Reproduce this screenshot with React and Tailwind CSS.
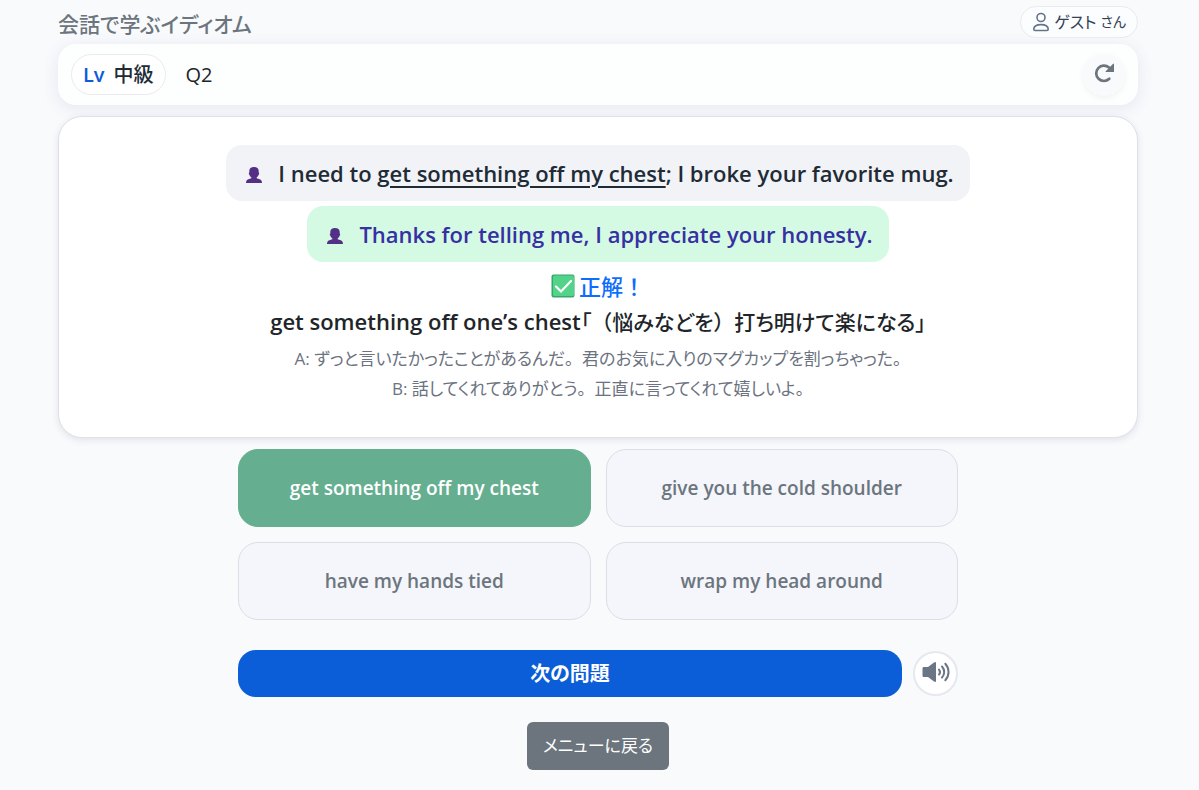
import { useState } from "react";

const choices = [
    "get something off my chest",
    "give you the cold shoulder",
    "have my hands tied",
    "wrap my head around",
];
const answer = choices[0];

// keeps full width punctuation inside proportional kana
function Wide({ children }) {
    return <span className="[font-feature-settings:normal]">{children}</span>
}

function Speaker() {
    return <svg viewBox="0 0 16 16" className="mt-1 w-4 h-4 shrink-0" aria-hidden="true">
        <path d="M3.300 4C3.300 1.300 5 0 8 0s4.700 1.300 4.700 4v1.600c.7.200.6 1.900-.1 2.100-.3 1.200-.9 2-1.900 2.600v1l3 1c1.500.6 2.200 1.500 2.300 3.700H0c.1-2.200.8-3.100 2.300-3.700l3-1v-1C4.300 9.700 3.700 8.900 3.400 7.700c-.7-.2-.8-1.900-.1-2.100z" fill="#533085" />
    </svg>
}

function CheckMark() {
    return <svg viewBox="0 0 24 24" className="w-6 h-6" aria-hidden="true">
        <rect x="0.500" y="0.500" width="23" height="23" rx="2" fill="#35a868" />
        <rect x="2" y="1.500" width="21" height="20.500" rx="1.500" fill="#53d28a" />
        <path d="M5 12.500l5 5L20 7" fill="none" stroke="#fff" strokeWidth="2.200" strokeLinecap="round" />
    </svg>
}

function PersonIcon() {
    return <svg viewBox="0 0 18 20" className="h-5 w-[18px]" fill="none" stroke="#64748b" strokeWidth="1.600" aria-hidden="true">
        <circle cx="9" cy="5.500" r="4" />
        <path d="M1.800 17.300C1.800 14.500 4.500 12.600 9 12.600s7.200 1.900 7.200 4.700c0 .8-.4 1.200-1.200 1.200H3c-.8 0-1.200-.4-1.200-1.200z" />
    </svg>
}

function RetryIcon() {
    return <svg viewBox="0 0 20 20" className="mb-[3px] w-5 h-5" aria-hidden="true">
        <path d="M15.300 15.800A7.700 7.700 0 1 1 15 4.500" fill="none" stroke="#6c757d" strokeWidth="2.700" strokeLinecap="round" />
        <path d="M20 1.300v7.200q0 .6-.6.600h-7.400q-1 0-.3-.8L18.900.9q1.100-.9 1.100.4z" fill="#6c757d" />
    </svg>
}

function SoundIcon() {
    return <svg viewBox="0 0 28 20" className="mb-[3px] w-7 h-5" aria-hidden="true">
        <path d="M.5 6.500C.5 5.500 1 5 2 5h4l6-4.500q2-1 2 .5v18q0 1.500-2 .5L6 15H2C1 15 .5 14.500.5 13.500z" fill="#6b7684" />
        <path d="M17 7.500a4 4 0 0 1 0 5M20 4.500a8 8 0 0 1 0 11M23.300 1.800a12 12 0 0 1 0 16.400" fill="none" stroke="#6b7684" strokeWidth="2" strokeLinecap="round" />
    </svg>
}

export default function App() {
    const [selected, setSelected] = useState(answer);

    return <div className="min-h-screen bg-[#f9fafc] pl-[58px] pr-[61px] pb-5 text-[#212529] font-['Open_Sans','Noto_Sans_CJK_JP',sans-serif] [font-feature-settings:'palt'] [text-spacing-trim:space-all]">
        <header className="flex h-11 items-center justify-between pb-px">
            <h1 className="pt-1 text-[21px] leading-7 font-medium text-[#6c757d]">会話で学ぶイディオム</h1>
            <button className="relative z-10 flex h-8 items-center gap-1 rounded-full border border-[#e9ebf0] bg-[#fcfdfe] px-[11px] text-base text-[#334155]">
                <PersonIcon />
                <span>ゲスト</span>
                <span className="text-sm">さん</span>
            </button>
        </header>

        <main>
            <section className="flex h-[61px] items-center justify-between rounded-[18px] bg-[#fdfefe] px-[13px] shadow-[0_3px_14px_3px_rgba(80,80,150,0.08)]">
                <div className="flex items-center gap-5 text-xl">
                    <span className="flex h-[41px] items-center gap-[9px] rounded-full border border-[#e9ebee] bg-white px-[11px] font-semibold">
                        <span className="text-[#0d5bdb]">Lv</span>
                        <span className="font-medium text-[#212b36]">中級</span>
                    </span>
                    <span>Q2</span>
                </div>
                <button aria-label="やり直す" className="flex size-[42px] items-center justify-center rounded-full bg-[#f9fafc] shadow-[0_2px_6px_rgba(0,0,0,0.05)]">
                    <RetryIcon />
                </button>
            </section>

            <section className="relative mt-[11px] flex flex-col items-center rounded-3xl border border-[#dfe1e9] bg-white px-6 pt-7 pb-[33px] text-center shadow-[0_2px_7px_rgba(60,60,110,0.12)]">
                <p className="flex min-h-14 items-center gap-4 rounded-2xl bg-[#f2f3f6] pl-5 pr-4 text-[22px] font-semibold text-[#212b36]">
                    <Speaker />
                    <span>I need to <u className="underline-offset-4 decoration-2">get something off my chest</u>; I broke your favorite mug.</span>
                </p>
                <p className="mt-[5px] flex min-h-14 items-center gap-4 rounded-2xl bg-[#d5fae4] pl-5 pr-4 text-[22px] font-semibold text-[#3730a3]">
                    <Speaker />
                    <span>Thanks for telling me, I appreciate your honesty.</span>
                </p>
                <p className="mt-2 flex h-8 items-center gap-1 text-[22px] font-medium text-[#0d6efd]">
                    <CheckMark />
                    <span>正解<Wide>！</Wide></span>
                </p>
                <p className="mt-px text-[22px] leading-9 font-semibold">
                    get something off one’s chest
                    <span className="text-[21px] font-medium">「<Wide>（</Wide>悩みなどを<Wide>）</Wide>打ち明けて楽になる」</span>
                </p>
                <div className="mt-1 text-[17px] leading-[30px] text-[#6b7280]">
                    <p>A: ずっと言いたかったことがあるんだ<Wide>。</Wide>君のお気に入りのマグカップを割っちゃった。</p>
                    <p>B: 話してくれてありがとう<Wide>。</Wide>正直に言ってくれて嬉しいよ。</p>
                </div>
            </section>

            <div className="mx-auto mt-[11px] max-w-[720px]">
                <div className="grid grid-cols-2 gap-[15px]">
                    {choices.map((choice) => (
                        <button
                            key={choice}
                            onClick={() => setSelected(choice)}
                            className={choice === selected
                                ? "h-[78px] rounded-[20px] border border-[#65ae90] bg-[#65ae90] text-[19px] font-semibold text-white"
                                : "h-[78px] rounded-[20px] border border-[#dcdee6] bg-[#f4f6fb] text-[19px] font-semibold text-[#6c757d]"}
                        >
                            {choice}
                        </button>
                    ))}
                </div>
                <div className="mt-[30px] flex items-center gap-[11px]">
                    <button className="h-[47px] flex-1 rounded-[18px] bg-[#0b5ed7] text-xl font-semibold text-white">次の問題</button>
                    <button aria-label="音声を再生" className="flex size-[45px] items-center justify-center rounded-full border-2 border-[#e6e8ef] bg-white">
                        <SoundIcon />
                    </button>
                </div>
            </div>

            <div className="mt-[25px] flex justify-center">
                <button className="h-12 rounded-md bg-[#6c757d] px-4 text-[17px] text-white">メニューに戻る</button>
            </div>
        </main>
    </div>
}
